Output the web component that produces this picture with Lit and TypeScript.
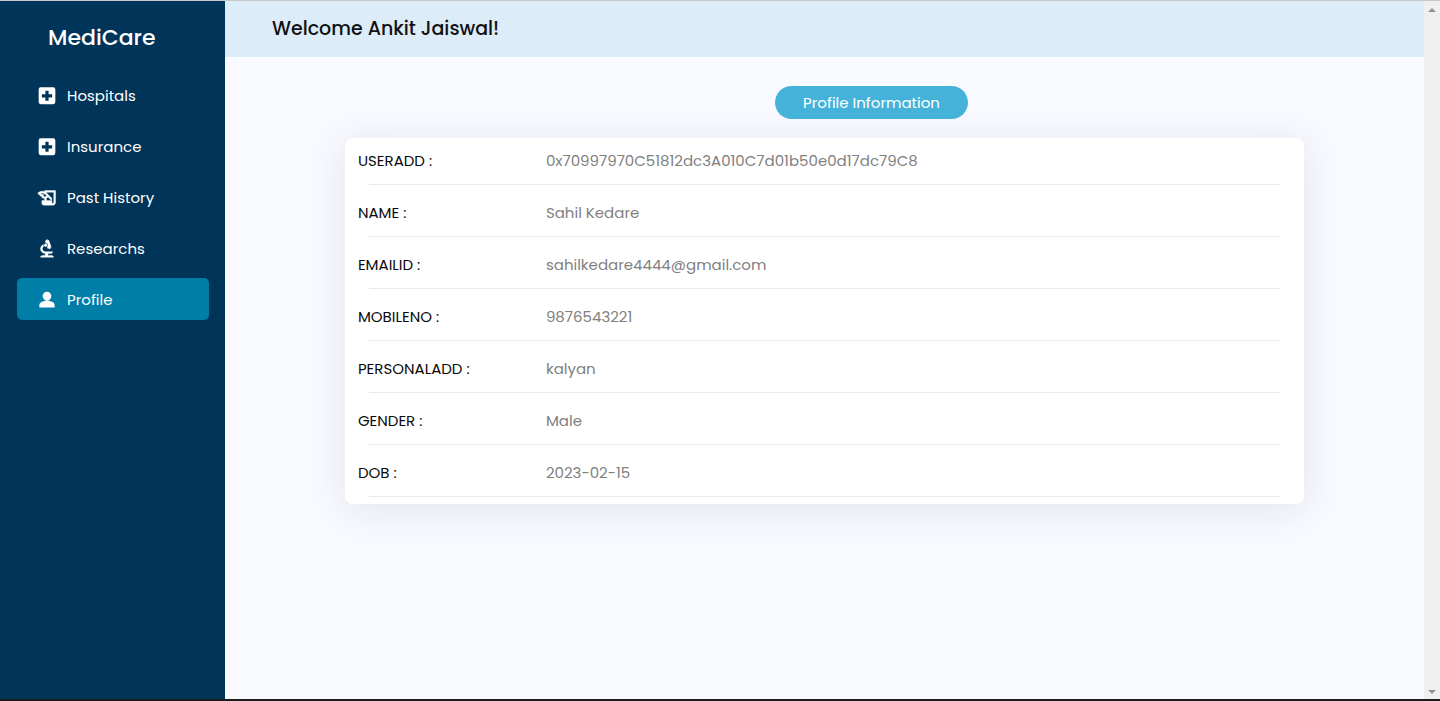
import { LitElement, html, svg, css } from "lit";
import { customElement, property, state } from "lit/decorators.js";
import { classMap } from "lit/directives/class-map.js";

const icons: Record<string, unknown> = {
  plus: svg`<path fill-rule="evenodd" d="M4.500 1.800h15a2.500 2.500 0 0 1 2.500 2.500v15.200a2.500 2.500 0 0 1-2.500 2.500h-15A2.500 2.500 0 0 1 2 19.500V4.300a2.500 2.500 0 0 1 2.500-2.500zm5.600 4.200v4.100H5.800v3.800h4.300V18h3.800v-4.100h4.300v-3.800h-4.300V6z"/>`,
  history: svg`<path d="M9 4v1.380c-.83-.33-1.720-.5-2.610-.5-1.790 0-3.580.68-4.950 2.050l3.330 3.330h1.110v1.110c.86.86 1.980 1.310 3.110 1.360V15H6v3c0 1.100.9 2 2 2h10c1.660 0 3-1.340 3-3V4H9zm-1.110 6.410V8.260H5.610L4.570 7.220a5.070 5.070 0 0 1 1.820-.34c1.340 0 2.590.52 3.540 1.460l1.410 1.410-.2.2c-.51.51-1.190.8-1.920.8-.47 0-.93-.12-1.330-.34zM19 17c0 .55-.45 1-1 1s-1-.45-1-1v-2h-6v-2.590c.57-.23 1.100-.57 1.560-1.030l.2-.2L15.590 14H17v-1.410l-6-5.970V6h8v11z" stroke="currentColor" stroke-width=".4" transform="translate(-.8 -1.200) scale(1.100)"/>`,
  research: svg`<g stroke="currentColor" stroke-width=".4" transform="translate(-1.400 -1.400) scale(1.120)"><path d="M7 19c-1.100 0-2 .9-2 2h14c0-1.100-.9-2-2-2h-4v-2h3c1.100 0 2-.9 2-2h-8c-1.660 0-3-1.340-3-3 0-1.090.59-2.040 1.460-2.560C8.170 9.030 8 8.540 8 8c0-.21.04-.42.09-.62C6.280 8.130 5 9.920 5 12c0 2.760 2.240 5 5 5v2H7z"/><path d="M10.560 5.510C11.910 5.540 13 6.640 13 8c0 .75-.33 1.410-.85 1.870l.59 1.620.94-.34.34.94 1.880-.68-.34-.94.94-.34-2.740-7.520-.94.34-.34-.94-1.880.68.34.94-.94.35z"/><circle cx="10.500" cy="8" r="1.500"/></g>`,
  person: svg`<path d="M12 2.300a5.200 5.200 0 0 1 5.200 5.200c0 3-2.100 5.600-5.200 5.600S6.800 10.500 6.800 7.500A5.200 5.200 0 0 1 12 2.300zM12 13.200c5 0 9.200 1.900 9.200 5.500v2.600H2.800v-2.600c0-3.600 4.200-5.500 9.200-5.500z"/>`,
};

@customElement("side-nav")
class SideNav extends LitElement {
  static styles = css`
    :host {
      display: block;
      background: #003459;
      color: #fff;
      padding: 17px 16px 0 17px;
      box-sizing: border-box;
    }
    .brand {
      margin: 0 0 16px;
      padding-left: 31px;
      font-size: 22px;
      font-weight: 500;
      line-height: 40px;
    }
    .list {
      list-style: none;
      margin: 0;
      padding: 0;
      display: grid;
      gap: 9px;
    }
    .link {
      display: flex;
      align-items: center;
      gap: 10px;
      height: 42px;
      padding-left: 20px;
      border-radius: 5px;
      color: inherit;
      text-decoration: none;
      font-size: 15px;
    }
    .active {
      background: #007ea7;
    }
    .icon {
      width: 20px;
      height: 20px;
      fill: currentColor;
      overflow: visible;
    }
  `;

  @state() private current = "Profile";

  private items = [
    { label: "Hospitals", icon: "plus" },
    { label: "Insurance", icon: "plus" },
    { label: "Past History", icon: "history" },
    { label: "Researchs", icon: "research" },
    { label: "Profile", icon: "person" },
  ];

  render() {
    return html`
      <h1 class="brand">MediCare</h1>
      <nav aria-label="Main">
        <ul class="list">
          ${this.items.map(
            (item) => html`<li>
              <a
                href="#"
                class=${classMap({ link: true, active: item.label === this.current })}
                @click=${(e: Event) => {
                  e.preventDefault();
                  this.current = item.label;
                }}
              >
                <svg class="icon" viewBox="0 -1 24 24" aria-hidden="true">${icons[item.icon]}</svg>
                <span>${item.label}</span>
              </a>
            </li>`
          )}
        </ul>
      </nav>
    `;
  }
}

@customElement("profile-card")
class ProfileCard extends LitElement {
  static styles = css`
    :host {
      display: block;
      background: #fff;
      border-radius: 8px;
      padding-bottom: 2px;
      box-shadow: 0 5px 40px rgba(20, 25, 50, 0.1);
    }
    .fields {
      margin: 0;
    }
    .row {
      display: grid;
      grid-template-columns: 188px 1fr;
      padding: 0 13px;
      line-height: 46px;
      font-size: 15px;
    }
    .label {
      color: #0b0b0b;
    }
    .value {
      margin: 0;
      color: #808080;
    }
    .rule {
      width: 95%;
      height: 1px;
      margin: 0 auto 5px;
      background: #e9eaee;
    }
  `;

  @property({ attribute: false }) fields: [string, string][] = [];

  render() {
    return html`<dl class="fields">
      ${this.fields.map(
        ([label, value]) => html`<div>
          <div class="row">
            <dt class="label">${label} :</dt>
            <dd class="value">${value}</dd>
          </div>
          <div class="rule"></div>
        </div>`
      )}
    </dl>`;
  }
}

@customElement("app-root")
class AppRoot extends LitElement {
  static styles = css`
    :host {
      display: grid;
      grid-template-columns: 225px 1fr 16px;
      min-height: 100vh;
      box-sizing: border-box;
      border-top: 1px solid #c6c9cb;
      border-bottom: 2px solid #1b1b1b;
      background: #f9faff;
      font-family: Poppins, Inter, "Open Sans", sans-serif;
    }
    .header {
      background: #dcecf9;
      padding: 0 47px;
    }
    .welcome {
      margin: 0;
      font-size: 19px;
      font-weight: 500;
      line-height: 56px;
      color: #111;
    }
    .actions {
      display: flex;
      justify-content: center;
      padding: 29px 0 19px 94px;
    }
    .pill {
      height: 33px;
      padding: 0 28px;
      border: 0;
      border-radius: 17px;
      background: #45b3d9;
      color: #fff;
      font: inherit;
      font-size: 15px;
    }
    .card {
      width: 80%;
      margin: 0 auto 40px;
    }
    .track {
      display: flex;
      flex-direction: column;
      justify-content: space-between;
      align-items: center;
      padding: 7px 0 5px;
      background: #f0f0f0;
    }
    .arrow {
      width: 8px;
      height: 4px;
      fill: #8d9298;
    }
  `;

  private fields: [string, string][] = [
    ["USERADD", "0x70997970C51812dc3A010C7d01b50e0d17dc79C8"],
    ["NAME", "Sahil Kedare"],
    ["EMAILID", "sahilkedare4444@gmail.com"],
    ["MOBILENO", "9876543221"],
    ["PERSONALADD", "kalyan"],
    ["GENDER", "Male"],
    ["DOB", "2023-02-15"],
  ];

  render() {
    return html`
      <side-nav></side-nav>
      <main>
        <header class="header"><h2 class="welcome">Welcome Ankit Jaiswal!</h2></header>
        <div class="actions"><button class="pill" type="button">Profile Information</button></div>
        <profile-card class="card" .fields=${this.fields}></profile-card>
      </main>
      <div class="track" aria-hidden="true">
        <svg class="arrow" viewBox="0 0 8 4"><path d="M0 4L4 0l4 4z" /></svg>
        <svg class="arrow" viewBox="0 0 8 4"><path d="M0 0h8L4 4z" /></svg>
      </div>
    `;
  }
}
